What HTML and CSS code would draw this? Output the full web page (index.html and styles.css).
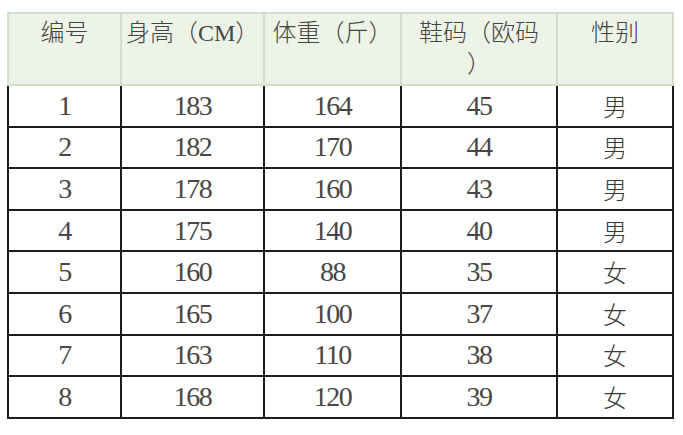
FILE: index.html
```html
<!DOCTYPE html>
<html lang="zh">
<head>
<meta charset="utf-8">
<link rel="stylesheet" href="styles.css">
</head>
<body>
<div class="wrap">
<table class="grid">
<colgroup>
<col class="c1"><col class="c2"><col class="c3"><col class="c4"><col class="c5">
</colgroup>
<thead>
<tr class="head">
<th>编号</th><th>身高（CM）</th><th>体重（斤）</th><th>鞋码（欧码<br>）</th><th>性别</th>
</tr>
</thead>
<tbody>
<tr><td>1</td><td>183</td><td>164</td><td>45</td><td class="cjk">男</td></tr>
<tr><td>2</td><td>182</td><td>170</td><td>44</td><td class="cjk">男</td></tr>
<tr><td>3</td><td>178</td><td>160</td><td>43</td><td class="cjk">男</td></tr>
<tr><td>4</td><td>175</td><td>140</td><td>40</td><td class="cjk">男</td></tr>
<tr><td>5</td><td>160</td><td>88</td><td>35</td><td class="cjk">女</td></tr>
<tr><td>6</td><td>165</td><td>100</td><td>37</td><td class="cjk">女</td></tr>
<tr><td>7</td><td>163</td><td>110</td><td>38</td><td class="cjk">女</td></tr>
<tr><td>8</td><td>168</td><td>120</td><td>39</td><td class="cjk">女</td></tr>
</tbody>
</table>
</div>
</body>
</html>
```
FILE: styles.css
```css
html, body {
  margin: 0;
  padding: 0;
  background: #ffffff;
}
.wrap {
  padding: 12px 0 0 7px;
}
.grid {
  border-collapse: collapse;
  table-layout: fixed;
  width: 667px;
  font-family: "Liberation Serif", "Noto Sans CJK SC", serif;
  font-size: 24px;
  color: #3a3a3a;
}
.c1 { width: 113px; }
.c2 { width: 143px; }
.c3 { width: 137px; }
.c4 { width: 156px; }
.c5 { width: 116px; }
.head th {
  height: 72px;
  box-sizing: border-box;
  background: #edf3e7;
  border: 2px solid #d2ddca;
  font-family: "Liberation Serif", "Noto Sans CJK SC", serif;
  font-weight: 300;
  line-height: 31px;
  vertical-align: top;
  padding: 4px 4px 0;
  text-align: center;
  color: #444;
}
tbody tr {
  height: 41.6px;
}
tbody td {
  border: 2px solid #1c1c1c;
  text-align: center;
  vertical-align: middle;
  padding: 0;
  font-size: 28px;
  letter-spacing: -1.5px;
  line-height: 30px;
  color: #474747;
}
tbody td.cjk {
  font-family: "Noto Sans CJK SC", serif;
  font-size: 24px;
  letter-spacing: 0;
  font-weight: 300;
  color: #3a3a3a;
}
```
